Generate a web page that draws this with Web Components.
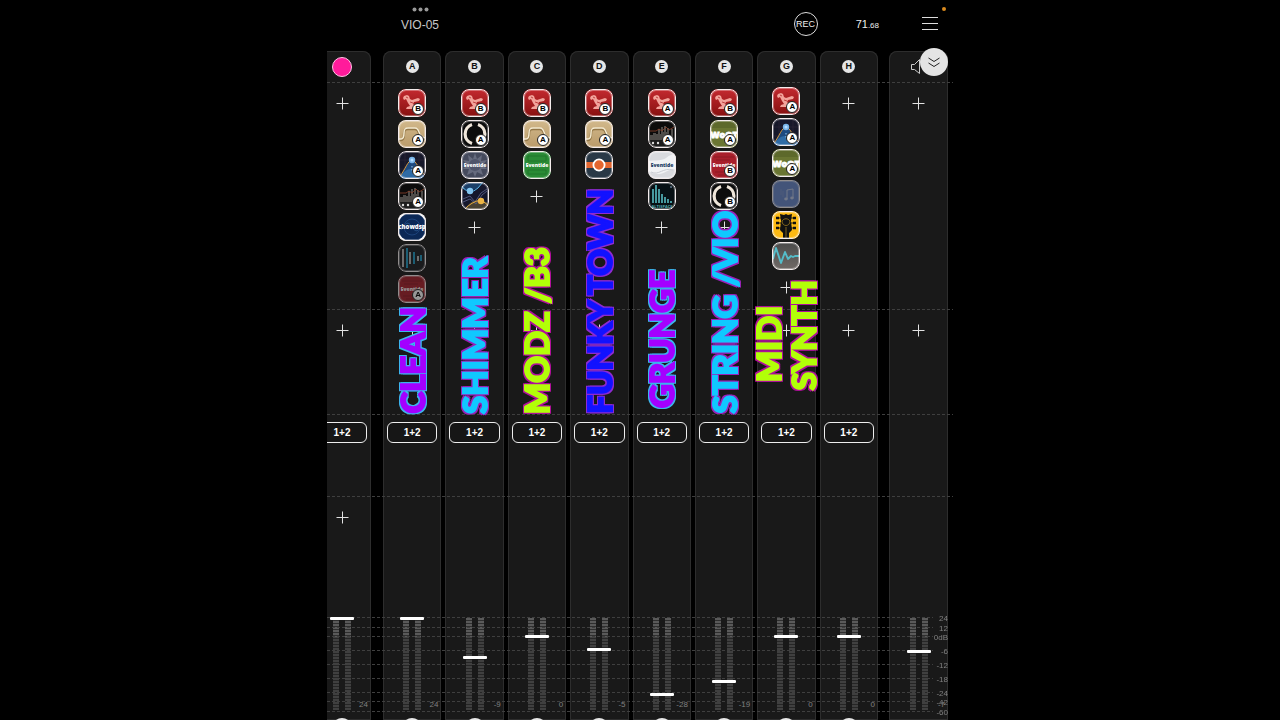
<!DOCTYPE html>
<html lang="en">
<head>
<meta charset="utf-8">
<title>VIO-05</title>
<style>
  html, body { margin: 0; height: 100%; background: #000; }
  body { overflow: hidden; font-family: "Liberation Sans", Arial, sans-serif; color: #eee; }
</style>
</head>
<body>
<mixer-app>
  <mixer-header slot="header" tempo="71" fraction=".68">VIO-05</mixer-header>

  <channel-strip slot="bus" kind="bus" level="92" db="24"></channel-strip>

  <channel-strip name="A" level="92" db="24" full>
    <plugin-icon kind="claw" variant="B"></plugin-icon>
    <plugin-icon kind="curve" variant="A"></plugin-icon>
    <plugin-icon kind="peak" variant="A"></plugin-icon>
    <plugin-icon kind="spectrum" variant="A"></plugin-icon>
    <plugin-icon kind="chow"></plugin-icon>
    <plugin-icon kind="bars" bypassed></plugin-icon>
    <plugin-icon kind="red" variant="A" bypassed></plugin-icon>
    <track-caption slot="caption" tone="violet">CLEAN</track-caption>
  </channel-strip>

  <channel-strip name="B" level="53" db="-9">
    <plugin-icon kind="claw" variant="B"></plugin-icon>
    <plugin-icon kind="ring" variant="A"></plugin-icon>
    <plugin-icon kind="splat"></plugin-icon>
    <plugin-icon kind="nodes"></plugin-icon>
    <track-caption slot="caption" tone="sky">SHIMMER</track-caption>
  </channel-strip>

  <channel-strip name="C" level="74" db="0">
    <plugin-icon kind="claw" variant="B"></plugin-icon>
    <plugin-icon kind="curve" variant="A"></plugin-icon>
    <plugin-icon kind="green"></plugin-icon>
    <track-caption slot="caption" tone="lime">MODZ /B3</track-caption>
  </channel-strip>

  <channel-strip name="D" level="61" db="-5">
    <plugin-icon kind="claw" variant="B"></plugin-icon>
    <plugin-icon kind="curve" variant="A"></plugin-icon>
    <plugin-icon kind="target"></plugin-icon>
    <track-caption slot="caption" tone="blue">FUNKY TOWN</track-caption>
  </channel-strip>

  <channel-strip name="E" level="16" db="-28">
    <plugin-icon kind="claw" variant="A"></plugin-icon>
    <plugin-icon kind="spectrum" variant="A"></plugin-icon>
    <plugin-icon kind="white"></plugin-icon>
    <plugin-icon kind="space"></plugin-icon>
    <track-caption slot="caption" tone="violet" style="--lift: 6px">GRUNGE</track-caption>
  </channel-strip>

  <channel-strip name="F" level="29" db="-19">
    <plugin-icon kind="claw" variant="B"></plugin-icon>
    <plugin-icon kind="woot" variant="A"></plugin-icon>
    <plugin-icon kind="red" variant="B"></plugin-icon>
    <plugin-icon kind="ring" variant="B"></plugin-icon>
    <track-caption slot="caption" tone="sky">STRING /VIO</track-caption>
  </channel-strip>

  <channel-strip name="G" level="74" db="0" scrolled>
    <plugin-icon kind="claw" variant="A"></plugin-icon>
    <plugin-icon kind="peak" variant="A"></plugin-icon>
    <plugin-icon kind="woot" variant="A"></plugin-icon>
    <plugin-icon kind="music" bypassed></plugin-icon>
    <plugin-icon kind="guitar"></plugin-icon>
    <plugin-icon kind="wave"></plugin-icon>
    <track-caption slot="caption" tone="lime" style="--lift: 24px; --indent: 8px">MIDI<br>SYNTH</track-caption>
  </channel-strip>

  <channel-strip name="H" level="74" db="0"></channel-strip>

  <channel-strip slot="master" kind="master" level="59" db="-7"></channel-strip>
</mixer-app>

<script>
// small helper, every element here starts from a template
const html = (markup) => {
  const template = document.createElement('template')
  template.innerHTML = markup
  return template
}

// row heights shared by the strips and the dashed lines on top of them
const ROWS = '31px 227px 105px 82px 121px auto'

/* ---------- plugin icons ---------- */

const brand = (fill) => `<text x="14" y="16" text-anchor="middle" font-size="5" font-weight="800" fill="${fill}">Eventide</text>`

const ART = {
  claw: `
    <linearGradient id="g" x2="0" y2="1"><stop stop-color="#c42a30"/><stop offset="1" stop-color="#86100f"/></linearGradient>
    <rect width="28" height="28" fill="url(#g)"/>
    <path d="M5 9l1-2 3-1 2 1 1 3 2 1 6-2 2 1-1 2-5 1-1 2 3 3v2H8l1-2 3-1-2-3-2-4-2 1z" fill="#f2a39b"/>
    <path d="M8 8l2 1M12 13l3 1" stroke="#b02a2c" stroke-width=".8"/>`,
  curve: `
    <linearGradient id="g" x2="0" y2="1"><stop stop-color="#d2b98c"/><stop offset="1" stop-color="#b99a69"/></linearGradient>
    <rect width="28" height="28" fill="url(#g)"/>
    <path d="M0 20h3c3 0 3-3 3-6 0-4 1-5 4-5h7c2 0 3 1 4 4s3 6 7 6" fill="none" stroke="#937748" stroke-width="2.4"/>
    <path d="M0 19h3c3 0 3-3 3-6 0-4 1-5 4-5h7c2 0 3 1 4 4s3 6 7 6" fill="none" stroke="#f4ead0" stroke-width="1.5"/>`,
  peak: `
    <rect width="28" height="28" fill="#17182a"/>
    <path d="M0 9h28M0 18h28M7 0v28M21 0v28" stroke="#2b2638" stroke-width=".7"/>
    <path d="M0 27C6 22 10 9 14 9s8 13 14 18v1H0z" fill="#1d4a80"/>
    <path d="M0 28C5 21 9 18 13 18s10 4 15 9v1H0z" fill="#2f6ba5"/>
    <path d="M2 25C7 19 10 9 14 9s7 10 12 14" fill="none" stroke="#d79b45"/>
    <circle cx="14" cy="9" r="3.2" fill="#78b4e8"/><circle cx="14" cy="9" r="1.5" fill="#b5dcff"/>
    <path d="M14 15v5" stroke="#9ccaf0" stroke-dasharray="1.5 1.5"/>`,
  spectrum: `
    <rect width="28" height="28" fill="#0c0b0b"/>
    <path d="M2 21v-6h3v-2h3v1h2V9h2v5h1V7h2v5h1V6h2v6h1V8h2v7h2V9h2v12z" fill="#4f4c49"/>
    <path d="M2 11h6l3-2 3 2 4-4 3 3 5-3" fill="none" stroke="#8d452f" stroke-width=".8"/>
    <path d="M0 20h28v8H0z" fill="#1c1c1c"/>
    <circle cx="5" cy="23" r="1.2" fill="#ddd"/><circle cx="10" cy="23" r="1.2" fill="#ddd"/>`,
  chow: `
    <rect width="28" height="28" fill="#fff"/>
    <circle cx="14" cy="14" r="14.5" fill="#0b2856"/>
    <path d="M3 17c5-8 7-9 11-3s6 5 11-3" fill="none" stroke="#2e5c93" stroke-width=".8"/>
    <circle cx="14" cy="14" r="8" fill="none" stroke="#1d437b"/>
    <text x="14" y="16" text-anchor="middle" font-size="6" font-weight="800" fill="#fff">chowdsp</text>`,
  bars: `
    <rect width="28" height="28" fill="#1b1d21"/>
    <path d="M5 5v18M12 8v12M20 12v5" stroke="#dadada" stroke-width="1.6"/>
    <path d="M9 4v20M16 8v12M23 11v6" stroke="#22b7ea" stroke-width="1.6"/>`,
  red: `
    <rect width="28" height="28" fill="#a81f2b"/>
    <path d="M4 6h20M6 9h14M5 21h16M8 24h12" stroke="#8c1a25" stroke-width="1.2"/>${brand('#fff')}`,
  green: `
    <rect width="28" height="28" fill="#2a8b35"/>
    <path d="M5 5h18v5H5zM5 19h18v4H5z" fill="none" stroke="#20762c"/>${brand('#fff')}`,
  white: `
    <rect width="28" height="28" fill="#d9dade"/>
    <path d="M0 10c8-1 14 0 18-3s6-4 10-4v15c-8 0-12 5-17 5S3 22 0 19z" fill="#f1f2f4"/>
    <path d="M3 21c8 4 12-5 22-2" stroke="#c9ccd2" fill="none"/>${brand('#17395f')}`,
  splat: `
    <rect width="28" height="28" fill="#454a5d"/>
    <path d="M14 2l2 6 5-4-1 6 6-1-4 5 4 4-6 0 2 6-6-3-2 5-2-5-6 3 2-6-6 0 4-4-4-5 6 1-1-6 5 4z" fill="#666b7e"/>
    <circle cx="14" cy="14" r="6" fill="#50556a"/>${brand('#fff')}`,
  ring: `
    <rect width="28" height="28" fill="#0d0d0d"/>
    <path d="M11 4.5A10 10 0 0 0 11 23.5M17 4.5A10 10 0 0 1 17 23.5" fill="none" stroke="#efe6da" stroke-width="3.2"/>`,
  nodes: `
    <rect width="28" height="28" fill="#15172c"/>
    <path d="M0 6q9 6 18-1L22 0H0z" fill="#1b3f68"/>
    <path d="M3 28q8-12 17-10l8 3v7z" fill="#4a4233"/>
    <path d="M2 17l7-3 5 6 6-9 6-4M2 20l7-3 6 5 6-9 5-4" fill="none" stroke="#585d86" stroke-width=".9"/>
    <path d="M0 4q9 10 17 2l5-6" fill="none" stroke="#5ab4e6"/>
    <path d="M4 27q6-7 16-9l7 5" fill="none" stroke="#e0a63b"/>
    <circle cx="9" cy="9" r="3.2" fill="#83c5f0"/><circle cx="20" cy="19" r="3.2" fill="#eeb646"/>`,
  target: `
    <rect width="28" height="28" fill="#293846"/>
    <path d="M0 11h28v6H0z" fill="#e4662f"/>
    <circle cx="14" cy="14" r="5.6" fill="#e4662f" stroke="#fff" stroke-width="1.8"/>`,
  space: `
    <rect width="28" height="28" fill="#081115"/>
    <path d="M5 21V7M8 21V3M11 21V7M14 21v-9M17 21v-6M20 21v-4M23 21v-2" stroke="#4fa9ae" stroke-width="1.8"/>
    <circle cx="23" cy="5" r=".8" fill="#9bd"/>
    <text x="14" y="26" text-anchor="middle" font-size="4" font-weight="700" fill="#4fa9ae">ALTISPACE</text>`,
  woot: `
    <rect width="28" height="28" fill="#6a7632"/>
    <path d="M0 0h28v8H0z" fill="#5d692b"/>
    <text x="14" y="18" text-anchor="middle" font-size="9" font-weight="800" fill="#fff" stroke="#fff" stroke-width=".8">WoOT</text>`,
  music: `
    <rect width="28" height="28" fill="#6685c8"/>
    <path d="M15 19v-9l6-1v9" fill="none" stroke="#b9c4e2" stroke-width="1"/>
    <ellipse cx="14" cy="19" rx="1.8" ry="1.4" fill="#b9c4e2"/><ellipse cx="20" cy="18" rx="1.8" ry="1.4" fill="#b9c4e2"/>
    <path d="M9 9v6M11 11v6" stroke="#7890c8"/>`,
  guitar: `
    <rect width="28" height="28" fill="#fdb913"/>
    <path d="M8 3l4 1 2-1 2 1 4-1-1 7 1 9-3 3v6h-6v-6l-3-3 1-9z" fill="#111"/>
    <path d="M9 7H6M9 12H6M9 17H6M19 7h3M19 12h3M19 17h3" stroke="#111" stroke-width=".9"/>
    <path d="M4 7h3M4 12h3M4 17h3M21 7h3M21 12h3M21 17h3" stroke="#111" stroke-width="2.4"/>
    <path d="M10 10c0 6 8 6 8 0-2-3-6-3-8 0zM14 16v12" fill="none" stroke="#9c7a22" stroke-width=".8"/>`,
  wave: `
    <linearGradient id="g" x2="0" y2="1"><stop stop-color="#4a4a4a"/><stop offset="1" stop-color="#716a66"/></linearGradient>
    <rect width="28" height="28" fill="url(#g)"/>
    <path d="M1 17 4 6l5 15 4-11 3 7 3-3 2 1 2-1h4" fill="none" stroke="#54bcc9" stroke-width="1.9" stroke-linejoin="round"/>`
}

const pluginTemplate = html(`
  <style>
    :host { display: block; position: relative; width: 28px; height: 28px; }
    :host([bypassed]) { opacity: .55; }
    button {
      display: block; box-sizing: border-box; width: 28px; height: 28px; padding: 0;
      border: 0; border-radius: 8px; overflow: hidden; background: #111;
      position: relative;
    }
    button::after {
      content: ''; position: absolute; inset: 0; box-sizing: border-box;
      border: 1px solid #f4ecec; border-radius: 8px; box-shadow: inset 0 0 0 1px #fff5;
    }
    svg { display: block; width: 28px; height: 28px; font-family: "Open Sans", sans-serif; }
    .variant {
      position: absolute; right: 2px; bottom: 2px; z-index: 1;
      box-sizing: border-box; width: 12px; height: 12px; border-radius: 50%;
      border: 1px solid #222; background: #fff; color: #000;
      font: bold 8px/10px "Liberation Sans", sans-serif; text-align: center;
    }
    .variant:empty { display: none; }
  </style>
  <button type="button">
    <svg viewBox="0 0 28 28" aria-hidden="true"></svg>
    <span class="variant"></span>
  </button>
`)

customElements.define('plugin-icon',
  class extends HTMLElement {
    constructor () {
      super()
      this.attachShadow({ mode: 'open' })
        .appendChild(pluginTemplate.content.cloneNode(true))
    }

    connectedCallback () {
      this.shadowRoot.querySelector('svg').innerHTML = ART[this.getAttribute('kind')] || ''
      this.shadowRoot.querySelector('.variant').textContent = this.getAttribute('variant') || ''
      this.shadowRoot.querySelector('button').setAttribute('aria-label', this.getAttribute('kind'))
    }
  }
)

/* ---------- plus button of an empty slot ---------- */

const addTemplate = html(`
  <style>
    :host { display: block; }
    button { display: grid; place-items: center; width: 28px; height: 28px; padding: 0; border: 0; background: none; }
    svg { width: 13px; height: 13px; }
  </style>
  <button type="button" aria-label="Add">
    <svg viewBox="0 0 13 13"><path d="M6.5 .5v12M.5 6.5h12" stroke="#e2e2e2" stroke-width="1"/></svg>
  </button>
`)

customElements.define('add-slot',
  class extends HTMLElement {
    constructor () {
      super()
      this.attachShadow({ mode: 'open' })
        .appendChild(addTemplate.content.cloneNode(true))
    }
  }
)

/* ---------- caption running up the strip ---------- */

const captionTemplate = html(`
  <style>
    :host {
      display: block;
      margin-bottom: var(--lift, 0);
      writing-mode: vertical-rl;
      transform: rotate(180deg);
      text-indent: var(--indent, 0);
      white-space: nowrap;
      font: 900 33px/35px Lato, sans-serif;
      color: var(--fill);
      /* the stroke thickens the letters, the shadows draw the edge */
      -webkit-text-stroke: 2px var(--fill);
      text-shadow:
        2px 0 var(--edge), -2px 0 var(--edge), 0 2px var(--edge), 0 -2px var(--edge),
        2px 2px var(--edge), -2px -2px var(--edge), 2px -2px var(--edge), -2px 2px var(--edge);
    }
    :host([tone="violet"]) { --fill: #a400ff; --edge: #3db4ee; }
    :host([tone="sky"]) { --fill: #10c8ff; --edge: #9a22b8; }
    :host([tone="lime"]) { --fill: #b2ff08; --edge: #b0109c; }
    :host([tone="blue"]) { --fill: #1212ff; --edge: #8f2bd0; }
  </style>
  <slot></slot>
`)

customElements.define('track-caption',
  class extends HTMLElement {
    constructor () {
      super()
      this.attachShadow({ mode: 'open' })
        .appendChild(captionTemplate.content.cloneNode(true))
    }
  }
)

/* ---------- meters with the fader on top ---------- */

const faderTemplate = html(`
  <style>
    :host { display: grid; justify-items: center; height: 95px; }
    .meters, input { grid-area: 1 / 1; }
    .meters { display: flex; gap: 6px; padding: 1px 0 2px; }
    .meters span {
      width: 6px;
      background:
        repeating-linear-gradient(#0000 0 2px, #191919aa 2px 3px),
        linear-gradient(#5a5a5a 0 19px, #404040 19px);
    }
    input {
      appearance: none; -webkit-appearance: none;
      writing-mode: vertical-lr; direction: rtl;
      position: relative; z-index: 2;
      width: 24px; height: 95px; margin: 0; background: none;
    }
    input::-webkit-slider-thumb {
      -webkit-appearance: none;
      width: 24px; height: 3px; border-radius: 1px; background: #fff;
    }
  </style>
  <div class="meters"><span></span><span></span></div>
  <input type="range" min="0" max="92">
`)

customElements.define('level-fader',
  class extends HTMLElement {
    constructor () {
      super()
      this.attachShadow({ mode: 'open' })
        .appendChild(faderTemplate.content.cloneNode(true))
    }

    connectedCallback () {
      const input = this.shadowRoot.querySelector('input')
      input.value = this.getAttribute('level')
      input.setAttribute('aria-label', 'Level ' + this.getAttribute('label'))
    }
  }
)

/* ---------- one channel ---------- */

const stripTemplate = html(`
  <style>
    :host { display: block; position: relative; flex: 1 1 0; min-width: 0; }
    :host([kind="bus"]) { flex: none; width: 58px; }
    :host([kind="master"]) { flex: none; width: 59px; }
    .strip {
      display: grid; grid-template-rows: ${ROWS}; justify-items: center;
      height: 100%; border-radius: 8px 8px 0 0;
      background: #191919; box-shadow: inset 0 0 0 1px #2d2d2d;
    }
    .head { display: grid; place-items: center; }
    .name {
      width: 13px; height: 13px; border-radius: 50%; background: #e6e6e6;
      color: #111; font: bold 9px/13px "Liberation Sans", sans-serif; text-align: center;
    }
    .dot { box-sizing: border-box; width: 20px; height: 20px; border-radius: 50%; background: #ff1b9b; border: 1px solid #ffc4e4; }
    .speaker { display: block; width: 16px; height: 16px; }
    .slots { display: flex; flex-direction: column; align-items: center; gap: 3px; padding-top: 7px; min-height: 0; box-sizing: border-box; }
    :host([scrolled]) .plugins { padding-top: 5px; }
    .out { justify-self: stretch; padding: 8px 4px; }
    .out button {
      display: block; width: 100%; height: 21px; padding: 0;
      border: 1px solid #eee; border-radius: 6px; background: #161616; color: #fff;
      font: bold 10px/20px "Liberation Sans", sans-serif;
    }
    .level { justify-self: stretch; display: grid; align-content: start; }
    .db { grid-area: 1 / 1; place-self: end; padding: 0 3px 2px; font-size: 8px; line-height: 10px; color: #808080; }
    level-fader { grid-area: 1 / 1; }
    .knob { justify-self: center; width: 20px; height: 20px; margin-top: 6px; padding: 0; border: 0; border-radius: 50%; background: #e8e8e8; }
    .caption {
      position: absolute; z-index: 3; inset: 0; pointer-events: none;
      display: grid; grid-template-rows: 363px; align-items: end; justify-content: center;
    }
  </style>
  <div class="strip">
    <div class="head"></div>
    <div class="slots plugins"><slot></slot></div>
    <div class="slots"><add-slot></add-slot></div>
    <div class="out"></div>
    <div class="slots sends"></div>
    <div class="level"></div>
  </div>
  <div class="caption"><slot name="caption"></slot></div>
`)

customElements.define('channel-strip',
  class extends HTMLElement {
    constructor () {
      super()
      this.attachShadow({ mode: 'open' })
        .appendChild(stripTemplate.content.cloneNode(true))
    }

    connectedCallback () {
      const root = this.shadowRoot
      const kind = this.getAttribute('kind')
      const name = this.getAttribute('name') || kind

      let head = `<span class="name">${name}</span>`
      if (kind === 'bus') head = '<span class="dot"></span>'
      if (kind === 'master') {
        head = `<svg class="speaker" viewBox="0 0 16 16" fill="none" stroke="#ccc">
          <path d="M.5 5.5h3l5-5v14l-5-4h-3z"/></svg>`
      }
      root.querySelector('.head').innerHTML = head

      if (!this.hasAttribute('full')) root.querySelector('.plugins').append(document.createElement('add-slot'))
      // only the bus has sends
      if (kind === 'bus') root.querySelector('.sends').append(document.createElement('add-slot'))
      if (kind !== 'master') root.querySelector('.out').innerHTML = '<button type="button">1+2</button>'

      root.querySelector('.level').innerHTML = `
        <level-fader level="${this.getAttribute('level')}" label="${name}"></level-fader>
        <span class="db">${this.getAttribute('db')}</span>
        ${kind === 'master' ? '' : `<button type="button" class="knob" aria-label="Pan ${name}"></button>`}`
    }
  }
)

/* ---------- dashed lines and the dB scale ---------- */

// [label, distance to the next line]
const SCALE = [['24', 10], ['12', 9], ['0dB', 14], ['-6', 14], ['-12', 14], ['-18', 14], ['-24', 9], ['-42', 10], ['-60', 10]]

const linesTemplate = html(`
  <style>
    :host { display: grid; grid-template-rows: ${ROWS}; }
    i {
      display: block; height: 1px;
      background: repeating-linear-gradient(90deg, #3f3f3f 0 3px, #0000 3px 5px);
    }
    ol { list-style: none; margin: 0; padding: 0 5px 0 0; }
    li { display: grid; grid-template-columns: 1fr 15px; }
    li span { font-size: 8px; line-height: 3px; text-align: right; color: #808080; }
  </style>
  <span></span><i></i><i></i><i></i><i></i>
  <ol>${SCALE.map(([label, gap]) => `<li style="height: ${gap}px"><i></i><span>${label}</span></li>`).join('')}</ol>
`)

customElements.define('board-lines',
  class extends HTMLElement {
    constructor () {
      super()
      this.attachShadow({ mode: 'open' })
        .appendChild(linesTemplate.content.cloneNode(true))
    }
  }
)

/* ---------- top bar ---------- */

const headerTemplate = html(`
  <style>
    :host { display: flex; align-items: flex-start; gap: 38px; height: 51px; padding: 0 10px 0 74px; box-sizing: border-box; position: relative; }
    .title { display: grid; justify-items: center; gap: 5px; margin-right: auto; padding-top: 7px; }
    .title svg { display: block; width: 17px; height: 5px; }
    h1 { margin: 0; font-size: 12px; line-height: 16px; font-weight: normal; color: #c8c8c8; }
    button { padding: 0; border: 0; background: none; color: #eee; font-family: inherit; }
    .rec {
      box-sizing: border-box; width: 24px; height: 24px; margin-top: 12px;
      border: 1px solid #ddd; border-radius: 50%; font-size: 9px; line-height: 22px;
      display: flex; justify-content: center;
    }
    .tempo { font-size: 11px; line-height: 24px; margin-top: 12px; }
    .tempo small { font-size: 8px; }
    .menu { margin-top: 13px; width: 26px; height: 21px; }
    .menu svg { display: block; width: 26px; height: 21px; }
    .mic { position: absolute; top: 7px; right: 7px; width: 4px; height: 4px; border-radius: 50%; background: #d98a1e; }
  </style>
  <div class="title">
    <svg viewBox="0 0 17 5" fill="#999"><circle cx="2.5" cy="2.5" r="2"/><circle cx="8.5" cy="2.5" r="2"/><circle cx="14.5" cy="2.5" r="2"/></svg>
    <h1><slot></slot></h1>
  </div>
  <button type="button" class="rec">REC</button>
  <button type="button" class="tempo"></button>
  <button type="button" class="menu" aria-label="Menu">
    <svg viewBox="0 0 26 21"><path d="M5 4.5h16M5 10.5h16M5 16.5h16" stroke="#ddd"/></svg>
  </button>
  <span class="mic"></span>
`)

customElements.define('mixer-header',
  class extends HTMLElement {
    constructor () {
      super()
      this.attachShadow({ mode: 'open' })
        .appendChild(headerTemplate.content.cloneNode(true))
    }

    connectedCallback () {
      this.shadowRoot.querySelector('.tempo').innerHTML =
        `${this.getAttribute('tempo')}<small>${this.getAttribute('fraction')}</small>`
    }
  }
)

/* ---------- whole mixer ---------- */

const appTemplate = html(`
  <style>
    :host { display: flex; flex-direction: column; max-width: 626px; height: 100vh; margin: 0 auto; overflow: hidden; }
    .board { position: relative; flex: 1; display: flex; min-height: 0; padding-right: 5px; }
    /* the bus strip is scrolled part of the way out */
    .bus { display: flex; justify-content: flex-end; width: 44px; margin-right: 12px; overflow: hidden; }
    .channels { flex: 1; display: flex; gap: 4px; margin-right: 11px; min-width: 0; }
    board-lines { position: absolute; inset: 0; z-index: 1; pointer-events: none; }
    .collapse {
      position: absolute; z-index: 4; top: -3px; right: 5px;
      width: 28px; height: 28px; padding: 0; border: 0; border-radius: 50%; background: #e4e4e4;
    }
    .collapse svg { display: block; width: 28px; height: 28px; }
  </style>
  <slot name="header"></slot>
  <main class="board">
    <div class="bus"><slot name="bus"></slot></div>
    <div class="channels"><slot></slot></div>
    <slot name="master"></slot>
    <board-lines></board-lines>
    <button type="button" class="collapse" aria-label="Collapse">
      <svg viewBox="0 0 28 28" fill="none" stroke="#222"><path d="M8.5 10 14 13.5 19.5 10M8.5 15 14 18.5 19.5 15"/></svg>
    </button>
  </main>
`)

customElements.define('mixer-app',
  class extends HTMLElement {
    constructor () {
      super()
      this.attachShadow({ mode: 'open' })
        .appendChild(appTemplate.content.cloneNode(true))
    }
  }
)
</script>
</body>
</html>
